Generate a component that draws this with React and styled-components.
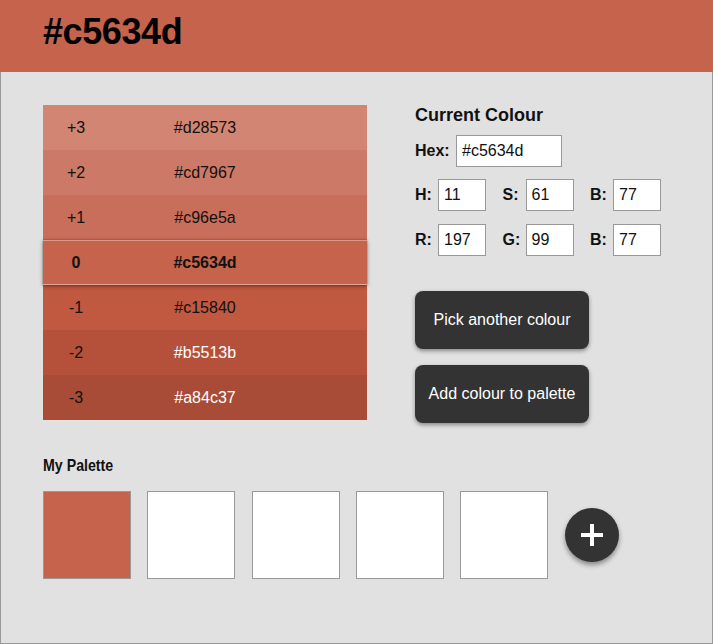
import React from "react";
import styled, { createGlobalStyle } from "styled-components";

const GlobalStyle = createGlobalStyle`
  * { box-sizing: border-box; }
  body {
    margin: 0;
    font-family: "Liberation Sans", Arial, sans-serif;
    background: #e1e1e1;
  }
`;

const shades = [
  { step: "+3", hex: "#d28573" },
  { step: "+2", hex: "#cd7967" },
  { step: "+1", hex: "#c96e5a" },
  { step: "0", hex: "#c5634d", current: true },
  { step: "-1", hex: "#c15840" },
  { step: "-2", hex: "#b5513b", light: true },
  { step: "-3", hex: "#a84c37", light: true },
];

const Page = styled.div`
  width: 713px;
  height: 644px;
  display: flex;
  flex-direction: column;
`;

const Header = styled.header`
  height: 72px;
  flex-shrink: 0;
  background: #c5634d;
  display: flex;
  align-items: center;
  padding: 0 0 9px 43px;
`;

const Title = styled.h1`
  margin: 0;
  font-size: 36px;
  font-weight: bold;
  color: #000;
  letter-spacing: -0.4px;
`;

const Content = styled.main`
  flex: 1;
  background: #e1e1e1;
  border: 1px solid #999;
  border-top: none;
  padding: 33px 0 0 42px;
`;

const Top = styled.div`
  display: flex;
  align-items: flex-start;
  gap: 48px;
`;

const Shades = styled.div`
  width: 324px;
  display: flex;
  flex-direction: column;
`;

const ShadeRow = styled.div`
  height: 45px;
  display: grid;
  grid-template-columns: 66px 1fr 66px;
  align-items: center;
  text-align: center;
  font-size: 16px;
  color: #111;
  background: ${(p) => p.$bg};
  font-weight: ${(p) => (p.$current ? "bold" : "normal")};
  position: relative;
  z-index: ${(p) => (p.$current ? 1 : 0)};
  box-shadow: ${(p) =>
    p.$current ? "0 1px 4px rgba(0,0,0,0.45), 0 0 0 0.5px rgba(0,0,0,0.15)" : "none"};
  border-top: ${(p) => (p.$current ? "1px solid rgba(255,255,255,0.35)" : "none")};
  border-bottom: ${(p) => (p.$current ? "1px solid rgba(255,255,255,0.45)" : "none")};
`;

const ShadeHex = styled.span`
  color: ${(p) => (p.$light ? "#fff" : "#111")};
`;

const Panel = styled.div`
  display: flex;
  flex-direction: column;
`;

const Heading = styled.h2`
  margin: 0 0 9px;
  font-size: 18px;
  line-height: 21px;
  font-weight: bold;
  color: #111;
`;

const FieldRow = styled.div`
  display: flex;
  align-items: center;
  margin-bottom: ${(p) => p.$mb || 0}px;
`;

const HsbGrid = styled.div`
  display: grid;
  grid-template-columns: repeat(3, 71px);
  column-gap: 16.5px;
  margin-bottom: ${(p) => p.$mb || 0}px;
`;

const Field = styled.label`
  display: flex;
  align-items: center;
`;

const Label = styled.span`
  font-size: 16px;
  font-weight: bold;
  color: #111;
  width: ${(p) => p.$w || 23}px;
  flex-shrink: 0;
`;

const Input = styled.input`
  width: ${(p) => p.$w || 48}px;
  height: 32px;
  border: 1px solid #999;
  background: #fff;
  padding: 0 5px;
  font-family: "Liberation Sans", Arial, sans-serif;
  font-size: 16px;
  color: #111;
  outline: none;
`;

const Button = styled.button`
  width: 174px;
  height: 58px;
  border: none;
  border-radius: 8px;
  background: #333;
  color: #fff;
  font-family: "Liberation Sans", Arial, sans-serif;
  font-size: 16px;
  box-shadow: 0 2px 4px rgba(0, 0, 0, 0.4);
  margin-top: ${(p) => p.$mt || 0}px;
  cursor: pointer;
`;

const PaletteTitle = styled.h2`
  margin: 33px 0 15px;
  font-size: 17px;
  line-height: 20px;
  font-weight: bold;
  color: #111;
  transform: scaleX(0.835);
  transform-origin: left center;
`;

const Swatches = styled.div`
  display: flex;
  align-items: center;
  gap: 16.25px;
`;

const Swatch = styled.div`
  width: 88px;
  height: 88px;
  border: 1px solid #999;
  background: ${(p) => p.$bg || "#fff"};
`;

const AddButton = styled.button`
  width: 54px;
  height: 54px;
  margin-left: 1px;
  border: none;
  border-radius: 50%;
  background: #333;
  box-shadow: 0 3px 5px rgba(0, 0, 0, 0.4);
  display: flex;
  align-items: center;
  justify-content: center;
  padding: 0;
  cursor: pointer;
`;

export default function App() {
  return (
    <Page>
      <GlobalStyle />
      <Header>
        <Title>#c5634d</Title>
      </Header>
      <Content>
        <Top>
          <Shades>
            {shades.map((s) => (
              <ShadeRow key={s.step} $bg={s.hex} $current={s.current}>
                <span>{s.step}</span>
                <ShadeHex $light={s.light}>{s.hex}</ShadeHex>
                <span />
              </ShadeRow>
            ))}
          </Shades>
          <Panel>
            <Heading>Current Colour</Heading>
            <FieldRow $mb={12}>
              <Label $w={41}>Hex:</Label>
              <Input $w={106} defaultValue="#c5634d" />
            </FieldRow>
            <HsbGrid $mb={13}>
              <Field><Label>H:</Label><Input defaultValue="11" /></Field>
              <Field><Label>S:</Label><Input defaultValue="61" /></Field>
              <Field><Label>B:</Label><Input defaultValue="77" /></Field>
            </HsbGrid>
            <HsbGrid>
              <Field><Label>R:</Label><Input defaultValue="197" /></Field>
              <Field><Label>G:</Label><Input defaultValue="99" /></Field>
              <Field><Label>B:</Label><Input defaultValue="77" /></Field>
            </HsbGrid>
            <Button $mt={35}>Pick another colour</Button>
            <Button $mt={16}>Add colour to palette</Button>
          </Panel>
        </Top>
        <PaletteTitle>My Palette</PaletteTitle>
        <Swatches>
          <Swatch $bg="#c5634d" />
          <Swatch />
          <Swatch />
          <Swatch />
          <Swatch />
          <AddButton aria-label="Add colour">
            <svg width="24" height="24" viewBox="0 0 24 24">
              <path d="M12 1v22M1 12h22" stroke="#fff" strokeWidth="4" />
            </svg>
          </AddButton>
        </Swatches>
      </Content>
    </Page>
  );
}
